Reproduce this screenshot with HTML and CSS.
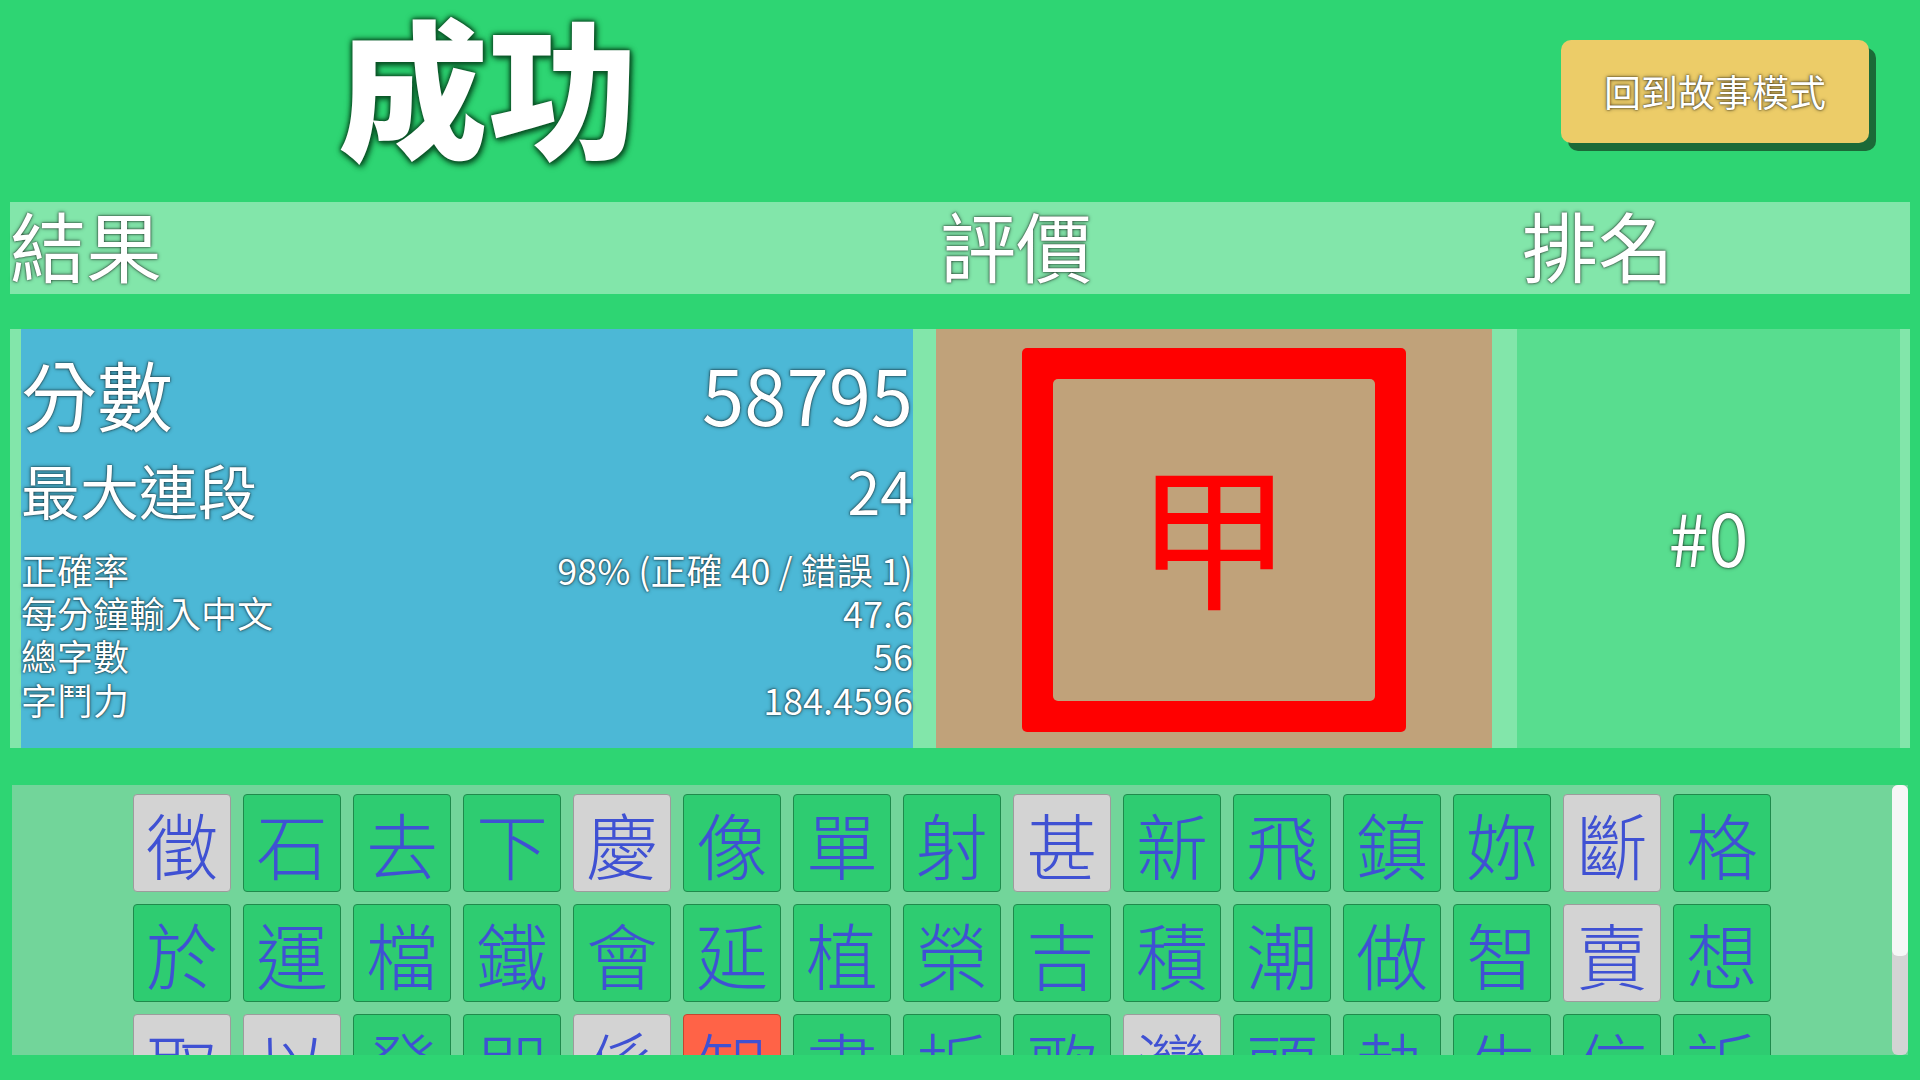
FILE: index.html
```html
<!DOCTYPE html>
<html lang="zh-Hant">
<head>
<meta charset="utf-8">
<title>成功</title>
<link rel="stylesheet" href="styles.css">
</head>
<body>
<div class="page">
  <header class="top">
    <div class="title-wrap"><h1 class="title">成功</h1></div>
    <button class="back ol">回到故事模式</button>
  </header>

  <div class="heads ol">
    <div>結果</div>
    <div>評價</div>
    <div>排名</div>
  </div>

  <div class="results">
    <div class="stats ol">
      <div class="row r1"><span>分數</span><span>58795</span></div>
      <div class="row r2"><span>最大連段</span><span>24</span></div>
      <div class="row r3 first"><span>正確率</span><span>98% (正確 40 / 錯誤 1)</span></div>
      <div class="row r3"><span>每分鐘輸入中文</span><span>47.6</span></div>
      <div class="row r3"><span>總字數</span><span>56</span></div>
      <div class="row r3"><span>字鬥力</span><span>184.4596</span></div>
    </div>
    <div class="grade">
      <div class="stamp"><div class="stamp-in">甲</div></div>
    </div>
    <div class="rank ol">#0</div>
  </div>

  <div class="chars">
    <div class="grid">
      <div class="tile gray">徵</div>
      <div class="tile">石</div>
      <div class="tile">去</div>
      <div class="tile">下</div>
      <div class="tile gray">慶</div>
      <div class="tile">像</div>
      <div class="tile">單</div>
      <div class="tile">射</div>
      <div class="tile gray">甚</div>
      <div class="tile">新</div>
      <div class="tile">飛</div>
      <div class="tile">鎮</div>
      <div class="tile">妳</div>
      <div class="tile gray">斷</div>
      <div class="tile">格</div>

      <div class="tile">於</div>
      <div class="tile">運</div>
      <div class="tile">檔</div>
      <div class="tile">鐵</div>
      <div class="tile">會</div>
      <div class="tile">延</div>
      <div class="tile">植</div>
      <div class="tile">榮</div>
      <div class="tile">吉</div>
      <div class="tile">積</div>
      <div class="tile">潮</div>
      <div class="tile">做</div>
      <div class="tile">智</div>
      <div class="tile gray">賣</div>
      <div class="tile">想</div>

      <div class="tile gray">取</div>
      <div class="tile gray">以</div>
      <div class="tile">發</div>
      <div class="tile">即</div>
      <div class="tile gray">係</div>
      <div class="tile red">知</div>
      <div class="tile">書</div>
      <div class="tile">折</div>
      <div class="tile">歌</div>
      <div class="tile gray">灣</div>
      <div class="tile">頭</div>
      <div class="tile">執</div>
      <div class="tile">生</div>
      <div class="tile">信</div>
      <div class="tile">訴</div>

      <div class="tile">的</div>
      <div class="tile">是</div>
      <div class="tile">在</div>
      <div class="tile">有</div>
      <div class="tile">人</div>
      <div class="tile">這</div>
      <div class="tile">中</div>
      <div class="tile">大</div>
      <div class="tile">為</div>
      <div class="tile">上</div>
      <div class="tile">個</div>
    </div>
    <div class="sb"><div class="thumb"></div></div>
  </div>
</div>
</body>
</html>
```

FILE: styles.css
```css
html, body {
  margin: 0;
  padding: 0;
}

body {
  width: 1920px;
  height: 1080px;
  overflow: hidden;
  background: #2ed573;
  color: #ffffff;
  font-family: "Noto Sans CJK TC", "Noto Sans", sans-serif;
}

.ol {
  text-shadow: 0 0 2px rgba(0, 0, 0, 0.85), 0 0 4px rgba(0, 0, 0, 0.45);
}

/* ---------- top header ---------- */
.top {
  display: flex;
  align-items: flex-start;
  height: 202px;
}

.title-wrap {
  width: 976px;
  padding-top: 8px;
  text-align: center;
}

.title {
  margin: 0;
  font-size: 150px;
  line-height: 150px;
  font-weight: 900;
  color: #ffffff;
  text-shadow: 0 0 3px #0a5226, 0 0 5px #0a5226, 0 0 7px #0c5a2a, 2px 3px 6px #0c5a2a;
}

.back {
  margin: 40px 51px 0 auto;
  width: 308px;
  height: 103px;
  padding: 0;
  border: none;
  border-radius: 10px;
  background: #eccc68;
  box-shadow: 7px 8px 0 #1b6a38;
  color: #ffffff;
  font-family: "Noto Sans CJK TC", "Noto Sans", sans-serif;
  font-size: 37px;
  line-height: 1;
  cursor: pointer;
}

/* ---------- column heads ---------- */
.heads {
  margin: 0 10px;
  height: 92px;
  background: #82e6aa;
  display: grid;
  grid-template-columns: 930px 582px 1fr;
  font-size: 76px;
  line-height: 84px;
}

/* ---------- results row ---------- */
.results {
  margin: 35px 10px 0;
  height: 419px;
  background: #82e6aa;
  display: flex;
  padding: 0 10px 0 11px;
}

.stats {
  width: 892px;
  background: #4cb8d6;
  padding-top: 20px;
  box-sizing: border-box;
}

.row {
  display: flex;
  justify-content: space-between;
  white-space: nowrap;
}

.r1 {
  font-size: 76px;
  line-height: 88px;
}

.r2 {
  margin-top: 19px;
  font-size: 59px;
  line-height: 68px;
}

.r3 {
  font-size: 36px;
  line-height: 43.2px;
}

.r3.first {
  margin-top: 24px;
}

.grade {
  width: 556px;
  margin-left: 23px;
  background: #c0a27a;
  display: flex;
  justify-content: center;
  align-items: flex-start;
}

.stamp {
  margin-top: 19px;
  width: 384px;
  height: 384px;
  box-sizing: border-box;
  padding: 31px;
  background: #ff0000;
  border-radius: 5px;
}

.stamp-in {
  width: 100%;
  height: 100%;
  box-sizing: border-box;
  padding-bottom: 22px;
  background: #c0a27a;
  border-radius: 5px;
  display: flex;
  align-items: center;
  justify-content: center;
  color: #ff0000;
  font-size: 156px;
  line-height: 1;
}

.rank {
  width: 383px;
  margin-left: 25px;
  padding-bottom: 6px;
  box-sizing: border-box;
  background: #58dd8f;
  display: flex;
  align-items: center;
  justify-content: center;
  font-size: 72px;
  line-height: 1;
}

/* ---------- characters ---------- */
.chars {
  margin: 37px 12px 0;
  height: 270px;
  background: #72d59a;
  display: flex;
}

.grid {
  flex: 1;
  overflow: hidden;
  display: grid;
  grid-template-columns: repeat(15, 98px);
  grid-auto-rows: 98px;
  gap: 12px;
  justify-content: center;
  align-content: start;
  padding-top: 9px;
}

.tile {
  box-sizing: border-box;
  width: 98px;
  height: 98px;
  border: 1px solid #1f8a4c;
  border-radius: 4px;
  background: #2ecc71;
  display: flex;
  align-items: center;
  justify-content: center;
  color: #3f51d3;
  font-size: 72px;
  font-weight: 300;
  line-height: 1;
}

.tile.gray {
  background: #d3d3d3;
  border-color: #9c9c9c;
}

.tile.red {
  background: #ff6347;
  border-color: #c4462f;
}

.sb {
  width: 16px;
  background: #d4d4d4;
  border-radius: 6px;
}

.thumb {
  height: 171px;
  background: #f7f7f7;
  border-radius: 6px;
}
```
